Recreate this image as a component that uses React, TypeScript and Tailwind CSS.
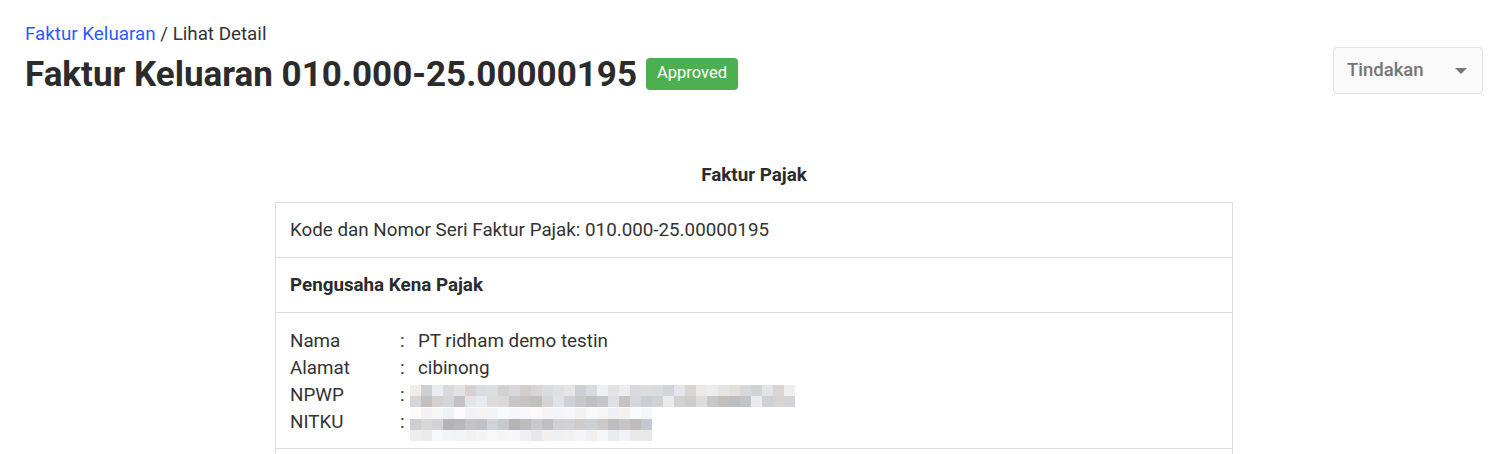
import React from "react";

const font = { fontFamily: "Roboto, 'Noto Sans', sans-serif" };

// pseudo-random grey tones for the pixelated (redacted) values
function pixelRows(seed: number, rows: number, cols: number, tones: [number, number][]) {
  let s = seed;
  const rnd = () => {
    s = (s * 9301 + 49297) % 233280;
    return s / 233280;
  };
  return Array.from({ length: rows }, (_, r) =>
    Array.from({ length: cols }, () => {
      const [lo, hi] = tones[r];
      const v = Math.round(lo + rnd() * (hi - lo));
      const tint = Math.round((rnd() - 0.5) * 8);
      return `rgb(${v + tint},${v},${v - tint + 2})`;
    })
  );
}

function Redacted({ rows }: { rows: string[][] }) {
  return (
    <div className="flex flex-col">
      {rows.map((row, i) => (
        <div key={i} className="flex">
          {row.map((c, j) => (
            <div key={j} className="h-[11px] w-[11px]" style={{ background: c }} />
          ))}
        </div>
      ))}
    </div>
  );
}

const npwp = pixelRows(17, 2, 35, [
  [205, 240],
  [190, 235],
]);
const nitku = pixelRows(41, 3, 22, [
  [240, 252],
  [175, 215],
  [232, 250],
]);

export default function App() {
  return (
    <div className="min-h-screen bg-white text-[#333]" style={font}>
      <div className="px-[25px] pt-[23px]">
        <div className="text-[18.8px] leading-[22px]">
          <a className="text-[#2a5cff]">Faktur Keluaran</a>
          <span className="text-[#333]"> / Lihat Detail</span>
        </div>

        <div className="flex items-start justify-between">
          <div className="mt-[8px] flex items-center gap-[9px]">
            <h1 className="text-[35px] font-bold leading-[44px] text-[#2b2b2b]">
              Faktur Keluaran 010.000-25.00000195
            </h1>
            <span className="mb-[3px] flex h-[32px] items-center rounded-[4px] bg-[#4caf50] px-[11px] text-[16.5px] text-white">
              Approved
            </span>
          </div>
          <button className="mr-[-5px] mt-[2px] flex h-[47px] w-[150px] items-center justify-between rounded-[4px] border border-[#e3e3e3] bg-[#fafafa] pl-[13px] pr-[15px] text-[18.5px] font-medium text-[#757575]">
            Tindakan
            <span className="h-0 w-0 border-x-[6px] border-t-[6px] border-x-transparent border-t-[#757575]" />
          </button>
        </div>
      </div>

      <div className="mx-auto mt-[67px] w-[963px] pl-[5px]">
        <div className="text-center text-[18.8px] font-bold leading-[22px] text-[#2b2b2b]">Faktur Pajak</div>
        <div className="mt-[16px] border border-[#ddd] text-[18.8px]">
          <div className="flex h-[55px] items-center border-b border-[#ddd] px-[14px]">
            Kode dan Nomor Seri Faktur Pajak: 010.000-25.00000195
          </div>
          <div className="flex h-[55px] items-center border-b border-[#ddd] px-[14px] font-bold text-[#2b2b2b]">
            Pengusaha Kena Pajak
          </div>
          <div className="h-[136px] border-b border-[#ddd] px-[14px] pt-[15px]">
            <div className="grid grid-cols-[110px_18px_1fr] leading-[27px]">
              <span>Nama</span>
              <span>:</span>
              <span>PT ridham demo testin</span>
              <span>Alamat</span>
              <span>:</span>
              <span>cibinong</span>
              <span>NPWP</span>
              <span>:</span>
              <span className="ml-[-8px] flex items-center">
                <Redacted rows={npwp} />
              </span>
              <span>NITKU</span>
              <span>:</span>
              <span className="ml-[-8px] mt-[-1px]">
                <Redacted rows={nitku} />
              </span>
            </div>
          </div>
          <div className="h-[40px]" />
        </div>
      </div>
    </div>
  );
}
